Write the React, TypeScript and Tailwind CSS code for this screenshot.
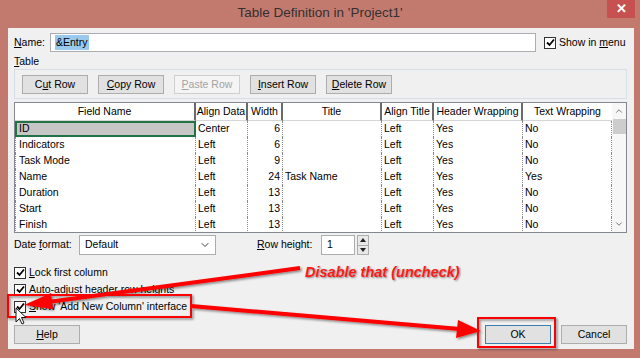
import React from "react";
import { ChevronDown, ChevronUp } from "lucide-react";

const font = "font-['Segoe_UI','Liberation_Sans',sans-serif]";

type Row = {
  field: string;
  align: string;
  width: number;
  title: string;
  alignTitle: string;
  header: string;
  wrap: string;
};

const rows: Row[] = [
  { field: "ID", align: "Center", width: 6, title: "", alignTitle: "Left", header: "Yes", wrap: "No" },
  { field: "Indicators", align: "Left", width: 6, title: "", alignTitle: "Left", header: "Yes", wrap: "No" },
  { field: "Task Mode", align: "Left", width: 9, title: "", alignTitle: "Left", header: "Yes", wrap: "No" },
  { field: "Name", align: "Left", width: 24, title: "Task Name", alignTitle: "Left", header: "Yes", wrap: "Yes" },
  { field: "Duration", align: "Left", width: 13, title: "", alignTitle: "Left", header: "Yes", wrap: "No" },
  { field: "Start", align: "Left", width: 13, title: "", alignTitle: "Left", header: "Yes", wrap: "No" },
  { field: "Finish", align: "Left", width: 13, title: "", alignTitle: "Left", header: "Yes", wrap: "No" },
];

const headers = ["Field Name", "Align Data", "Width", "Title", "Align Title", "Header Wrapping", "Text Wrapping"];

const Check = () => (
  <span className="flex h-[12px] w-[12px] items-center justify-center border border-[#333] bg-white">
    <svg width="9" height="9" viewBox="0 0 9 9">
      <path d="M1 4.5 L3.5 7 L8 1.5" fill="none" stroke="#000" strokeWidth="1.8" />
    </svg>
  </span>
);

const Btn = ({ children, disabled, def }: { children: React.ReactNode; disabled?: boolean; def?: boolean }) => (
  <div
    className={
      disabled
        ? "flex h-[19px] w-[66px] items-center justify-center border border-[#cfcfcf] bg-[#f4f4f4] text-[#a3a3a3]"
        : def
        ? "flex h-[19px] w-[66px] items-center justify-center border border-[#3c7fb1] bg-[#e1e1e1]"
        : "flex h-[19px] w-[66px] items-center justify-center border border-[#adadad] bg-[#e1e1e1]"
    }
  >
    {children}
  </div>
);

export default function App() {
  return (
    <div className={`relative h-[358px] w-[640px] overflow-hidden bg-[#c27a6f] text-[10.5px] text-black ${font}`}>
      {/* Title bar */}
      <div className="grid h-[28px] grid-cols-[1fr_auto_1fr]">
        <div />
        <div className="pt-[3px] text-[13.5px] text-[#33302f]">Table Definition in 'Project1'</div>
        <div className="flex justify-end pr-[5px]">
          <div className="flex h-[18px] w-[28px] items-center justify-center bg-[#c75050] text-[13px] font-bold text-white">
            ✕
          </div>
        </div>
      </div>

      {/* Dialog body */}
      <div className="ml-[8px] flex h-[321px] w-[626px] flex-col bg-[#f0f0f0] pl-[6px] pr-[7px]">
        {/* Name */}
        <div className="mt-[5px] flex h-[19px] items-center">
          <span className="w-[36px]">
            <u>N</u>ame:
          </span>
          <div className="flex h-[19px] w-[486px] items-center border border-[#abadb3] bg-white pl-[4px]">
            <span className="bg-[#99c9ef] px-[1px]">&amp;Entry</span>
          </div>
          <div className="ml-[8px] flex items-center gap-[3px]">
            <Check />
            <span>
              Show in <u>m</u>enu
            </span>
          </div>
        </div>

        <div className="mt-[3px] h-[12px] leading-[12px]">
          <u>T</u>able
        </div>

        {/* Button group */}
        <div className="mt-[2px] flex h-[30px] gap-[10px] border border-[#d5dfe5] pl-[7px] pt-[5px]">
          <Btn>
            C<u>u</u>t Row
          </Btn>
          <Btn>
            <u>C</u>opy Row
          </Btn>
          <Btn disabled>
            <u>P</u>aste Row
          </Btn>
          <Btn>
            <u>I</u>nsert Row
          </Btn>
          <Btn>
            <u>D</u>elete Row
          </Btn>
        </div>

        {/* Table */}
        <div className="mt-[3px] flex h-[131px] border border-[#828790] bg-white">
          <div className="grid grid-cols-[181px_52px_35px_99px_52px_89px_89px] grid-rows-[18px_repeat(7,16px)]">
            {headers.map((h, i) => (
              <div
                key={h}
                className={
                  i === 6
                    ? "flex items-center justify-center border-b border-[#d5d5d5] whitespace-nowrap"
                    : "flex items-center justify-center border-b border-r-2 border-b-[#d5d5d5] border-r-[#6a6a6a] whitespace-nowrap"
                }
              >
                {h}
              </div>
            ))}
            {rows.map((r, i) => (
              <React.Fragment key={r.field}>
                <div
                  className={
                    i === 0
                      ? "flex items-center border-2 border-[#217346] bg-[#c6c6c6] pl-[2px]"
                      : "flex items-center border-x border-dotted border-[#8a8a8a] pl-[3px]"
                  }
                >
                  {r.field}
                </div>
                <div className="flex items-center border-r border-dotted border-[#8a8a8a] pl-[2px]">{r.align}</div>
                <div className="flex items-center justify-end border-r border-dotted border-[#8a8a8a] pr-[2px]">{r.width}</div>
                <div className="flex items-center border-r border-dotted border-[#8a8a8a] pl-[2px]">{r.title}</div>
                <div className="flex items-center border-r border-dotted border-[#8a8a8a] pl-[2px]">{r.alignTitle}</div>
                <div className="flex items-center border-r border-dotted border-[#8a8a8a] pl-[2px]">{r.header}</div>
                <div className="flex items-center border-r border-dotted border-[#8a8a8a] pl-[2px]">{r.wrap}</div>
              </React.Fragment>
            ))}
          </div>
          {/* Scrollbar */}
          <div className="flex w-[14px] flex-col items-center bg-[#f7f7f7]">
            <ChevronUp size={10} className="mt-[3px] text-[#606060]" />
            <div className="mt-[3px] h-[15px] w-[13px] bg-[#cdcdcd]" />
            <div className="flex-1" />
            <ChevronDown size={10} className="mb-[3px] text-[#606060]" />
          </div>
        </div>

        {/* Date format / row height */}
        <div className="mt-[2px] flex h-[20px] items-center">
          <span className="w-[65px]">
            Date <u>f</u>ormat:
          </span>
          <div className="flex h-[20px] w-[137px] items-center justify-between border border-[#acacac] bg-white pl-[5px] pr-[4px]">
            <span>Default</span>
            <ChevronDown size={12} className="text-[#444]" />
          </div>
          <span className="ml-[41px] w-[64px]">
            <u>R</u>ow height:
          </span>
          <div className="flex h-[20px] w-[34px] items-center border border-[#acacac] bg-white pl-[5px]">1</div>
          <div className="ml-[2px] flex h-[20px] w-[12px] flex-col border border-[#acacac] bg-[#e8e8e8]">
            <div className="flex flex-1 items-center justify-center border-b border-[#acacac]">
              <svg width="6" height="4" viewBox="0 0 6 4">
                <path d="M0 4 L3 0 L6 4 Z" fill="#222" />
              </svg>
            </div>
            <div className="flex flex-1 items-center justify-center">
              <svg width="6" height="4" viewBox="0 0 6 4">
                <path d="M0 0 L3 4 L6 0 Z" fill="#222" />
              </svg>
            </div>
          </div>
        </div>

        {/* Checkboxes */}
        <div className="mt-[9px] flex flex-col">
          <div className="flex h-[17px] items-center gap-[3px]">
            <Check />
            <span>
              <u>L</u>ock first column
            </span>
          </div>
          <div className="flex h-[17px] items-center gap-[3px]">
            <Check />
            <span>
              <u>A</u>uto-adjust header row heights
            </span>
          </div>
          <div className="flex h-[17px] items-center gap-[3px]">
            <Check />
            <span>
              <u>S</u>how 'Add New Column' interface
            </span>
          </div>
        </div>

        {/* Bottom buttons */}
        <div className="mt-[10px] flex items-center">
          <Btn>
            <u>H</u>elp
          </Btn>
          <div className="flex-1" />
          <Btn def>OK</Btn>
          <div className="w-[10px]" />
          <Btn>Cancel</Btn>
        </div>
      </div>

      {/* Annotation overlay */}
      <svg className="pointer-events-none absolute left-0 top-0" width="640" height="358" viewBox="0 0 640 358">
        <defs>
          <filter id="sh" x="-10%" y="-10%" width="130%" height="150%">
            <feDropShadow dx="1.5" dy="1.5" stdDeviation="1.2" floodColor="#000" floodOpacity="0.45" />
          </filter>
        </defs>
        <g filter="url(#sh)">
          <rect x="8" y="295" width="183" height="22" fill="none" stroke="#ff0000" strokeWidth="2" />
          <rect x="478" y="318" width="77" height="29" fill="none" stroke="#ff0000" strokeWidth="2" />
          <line x1="300" y1="268" x2="48" y2="302" stroke="#ff0000" strokeWidth="4" />
          <polygon points="24,305 53,309 51,293" fill="#ff0000" />
          <line x1="191" y1="306" x2="460" y2="329" stroke="#ff0000" strokeWidth="4" />
          <polygon points="481,331 458,320 456,338" fill="#ff0000" />
        </g>
        {/* mouse cursor */}
        <path
          d="M16 308 L16 322 L19.5 318.5 L22 324 L24 323 L21.5 317.5 L26 317.5 Z"
          fill="#fff"
          stroke="#000"
          strokeWidth="0.9"
        />
      </svg>
      <div className="absolute left-[305px] top-[262px] text-[14.5px] font-bold italic text-[#ff1a1a] [text-shadow:1px_1px_2px_rgba(0,0,0,0.45)] font-['Liberation_Sans',sans-serif]">
        Disable that (uncheck)
      </div>
    </div>
  );
}
